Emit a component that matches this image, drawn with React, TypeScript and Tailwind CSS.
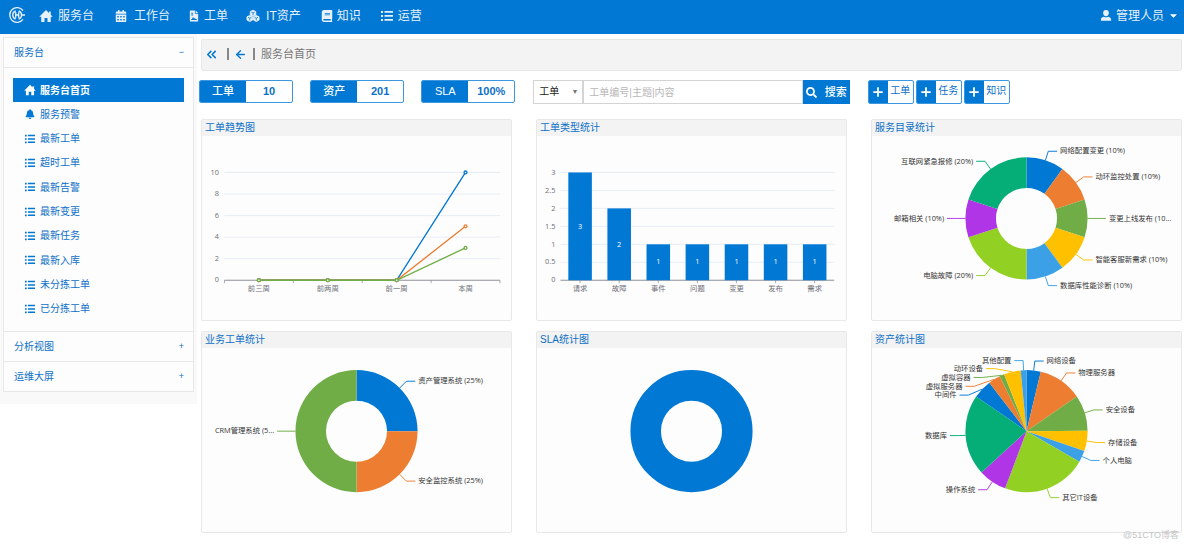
import React from "react";
import { FaCalendarAlt, FaBook, FaBell, FaSearch, FaCaretDown } from "react-icons/fa";
import { ChevronsLeft, ArrowLeft, Plus } from "lucide-react";

const CHART_FONT = "font-['Open_Sans','Noto_Sans_CJK_SC',sans-serif]";

type IconProps = { className?: string };

function HomeIcon({ className }: IconProps) {
  return (
    <svg viewBox="0 0 28 26" className={className} fill="currentColor" aria-hidden="true">
      <path d="M14 1 0.500 14.500H4.500V24.500Q4.500 25 5 25H11V17H17V25H23Q23.500 25 23.500 24.500V14.500H27.500L23.500 10.500V4H20V7Z" />
    </svg>
  );
}

function FileIcon({ className }: IconProps) {
  return (
    <svg viewBox="0 0 20 26" className={className} fill="currentColor" aria-hidden="true">
      <path fillRule="evenodd" d="M2 1H12V8H19V24Q19 25 18 25H2Q1 25 1 24V2Q1 1 2 1ZM4 6V8H8V6ZM4 10V12H8V10ZM4 21.500H16V19.500H13.500L11.500 17.500 9.800 19.200 8.200 14.500 5.500 19.500H4Z" />
      <path d="M13.500 1V6.500H19Z" />
    </svg>
  );
}

function CubesIcon({ className }: IconProps) {
  const cube = "M0-6.200 5.600-3.400V3.200L0 6 -5.600 3.200V-3.400Z";
  return (
    <svg viewBox="0 0 28 26" className={className} aria-hidden="true">
      {[[14, 7.500], [7.500, 18], [20.500, 18]].map(([x, y]) => (
        <g key={x} transform={`translate(${x} ${y})`}>
          <path d={cube} fill="currentColor" stroke="currentColor" strokeWidth="1.6" strokeLinejoin="round" />
          <path d="M-3.500-2.400 0-.6 3.500-2.400M0-.6V4" fill="none" stroke="#0078d4" strokeWidth="1.6" />
        </g>
      ))}
    </svg>
  );
}

function ListIcon({ className }: IconProps) {
  return (
    <svg viewBox="0 0 12 12" className={className} fill="currentColor" aria-hidden="true">
      {[1, 5, 9].map((y) => (
        <path key={y} d={`M0 ${y}h2v2H0zM3.500 ${y}H12v1.800H3.500z`} />
      ))}
    </svg>
  );
}

const navItems = [
  { label: "服务台", icon: HomeIcon, size: "size-[14px]", pad: "ml-[14px] gap-[5px]" },
  { label: "工作台", icon: FaCalendarAlt, size: "size-3", pad: "ml-[21px] gap-[7px]" },
  { label: "工单", icon: FileIcon, size: "h-3 w-[10px]", pad: "ml-[19px] gap-[5px]" },
  { label: "IT资产", icon: CubesIcon, size: "size-[14px]", pad: "ml-[18px] gap-[6px]" },
  { label: "知识", icon: FaBook, size: "size-3", pad: "ml-5 gap-1" },
  { label: "运营", icon: ListIcon, size: "size-3", pad: "ml-5 gap-[5px]" },
];

const sideItems = [
  "服务台首页", "服务预警", "最新工单", "超时工单", "最新告警",
  "最新变更", "最新任务", "最新入库", "未分拣工单", "已分拣工单",
];

function Logo() {
  return (
    <svg viewBox="0 0 24 24" className="size-4" fill="none" stroke="currentColor" aria-hidden="true">
      <path d="M21 5.500A11 11 0 1 0 21 18.500" strokeWidth="2" />
      <path d="M10 6A6.300 6.300 0 0 0 10 18M14.500 6A6.300 6.300 0 0 1 14.500 18" strokeWidth="2" />
      <path d="M10 8v8M14.500 8v8M10 12h4.500M19 12h5" strokeWidth="2" />
    </svg>
  );
}

function UserIcon() {
  return (
    <svg viewBox="0 0 12 14" className="h-[13px] w-3" fill="currentColor" aria-hidden="true">
      <path d="M6 1C4 1 2.900 2.400 2.900 4.200 2.900 6 4.200 7.800 6 7.800S9.100 6 9.100 4.200C9.100 2.400 8 1 6 1ZM3.600 8.300C1.500 8.900.5 9.800.5 11.400V12.600H11.500V11.400C11.500 9.800 10.500 8.900 8.400 8.300 7 9.200 5 9.200 3.600 8.300Z" />
    </svg>
  );
}

function Header() {
  return (
    <header className="flex h-[34px] items-center bg-[#0078d4] pr-[5px] pb-[3px] pl-[9px] text-xs text-[#e8f1f9]">
      <a href="#" aria-label="首页" className="pb-[2px]"><Logo /></a>
      <nav className="flex flex-1 items-center">
        {navItems.map(({ label, icon: Icon, size, pad }) => (
          <a key={label} href="#" className={`flex items-center whitespace-nowrap ${pad}`}>
            <Icon className={size} />
            <span>{label}</span>
          </a>
        ))}
      </nav>
      <button type="button" className="flex items-center gap-1">
        <UserIcon />
        <span>管理人员</span>
        <FaCaretDown className="size-[11px] text-white" />
      </button>
    </header>
  );
}

function SideHeading({ label, open }: { label: string; open?: boolean }) {
  return (
    <h2>
      <button type="button" aria-expanded={!!open} className="flex h-[29px] w-full items-center justify-between pr-[9px] pl-[10px]">
        <span>{label}</span>
        <span className="text-[9px]">{open ? "−" : "+"}</span>
      </button>
    </h2>
  );
}

function Sidebar() {
  return (
    <aside className="w-[197px] shrink-0 self-start bg-[#f9f9f9] pt-[3px] pr-[3px] pb-3 pl-[3px] text-[10px] text-[#0d70c8]">
      <div className="divide-y divide-[#e8e8e8] border border-[#e8e8e8] bg-[#fdfdfd]">
        <section>
          <SideHeading label="服务台" open />
        </section>
        <ul className="flex h-[264px] flex-col justify-between px-[9px] py-[10px]">
          {sideItems.map((label, i) => {
            const Icon = i === 0 ? HomeIcon : i === 1 ? FaBell : ListIcon;
            return (
              <li key={label}>
                <a
                  href="#"
                  className={`flex h-6 items-center gap-[5px] pl-[11px] ${i === 0 ? "bg-[#0078d4] font-bold text-white" : ""}`}
                >
                  <span className="flex w-[11px] justify-center text-[#0078d4]">
                    <Icon className={i === 0 ? "size-3 shrink-0 text-white" : "size-[10px]"} />
                  </span>
                  <span>{label}</span>
                </a>
              </li>
            );
          })}
        </ul>
        <section><SideHeading label="分析视图" /></section>
        <section><SideHeading label="运维大屏" /></section>
      </div>
    </aside>
  );
}

function Stat({ label, value }: { label: string; value: string }) {
  return (
    <dl className="flex h-[23px] w-[94px] items-stretch overflow-hidden rounded-[2px] border border-[#3a97e0] text-center leading-[21px]">
      <dt className="w-1/2 bg-[#0078d4] text-[11px] font-medium text-white">{label}</dt>
      <dd className="w-1/2 text-[11px] font-bold text-[#0d70c8]">{value}</dd>
    </dl>
  );
}

function Toolbar() {
  return (
    <div className="mt-[9px] -mr-[2px] -ml-[2px] grid grid-cols-3 gap-[18px]">
      <div className="flex justify-between">
        <Stat label="工单" value="10" />
        <Stat label="资产" value="201" />
        <Stat label="SLA" value="100%" />
      </div>
      <form className="flex h-6" onSubmit={(e) => e.preventDefault()}>
        <div className="relative flex w-[50px]">
          <select aria-label="类型" className="block h-6 w-full appearance-none border border-[#d4d4d4] bg-white pl-[5px] text-[10px] leading-[20px] text-[#222]">
            <option>工单</option>
          </select>
          <span className="pointer-events-none absolute top-0 right-[5px] text-[7px] leading-6 text-[#777]">▼</span>
        </div>
        <input
          type="text"
          aria-label="关键字"
          placeholder="工单编号|主题|内容"
          className="min-w-0 flex-1 border border-[#d4d4d4] bg-white px-[5px] text-[10px] placeholder:text-[#b8b8b8]"
        />
        <button type="submit" className="flex w-[47px] items-center justify-between bg-[#0078d4] pr-[3px] pl-[3px] text-[11px] font-medium text-white">
          <FaSearch className="size-[11px]" />
          搜索
        </button>
      </form>
      <div className="flex gap-[2px]">
        {["工单", "任务", "知识"].map((label) => (
          <button key={label} type="button" className="flex h-6 w-[46px] items-center overflow-hidden rounded-[2px] border border-[#3a97e0] text-[10px] text-[#0d70c8]">
            <span className="flex h-full w-[19px] items-center justify-center bg-[#0078d4] text-white">
              <Plus className="size-[14px]" strokeWidth={3} />
            </span>
            <span className="flex-1 pb-[3px] text-center">{label}</span>
          </button>
        ))}
      </div>
    </div>
  );
}

function Card({ title, children }: { title: string; children: React.ReactNode }) {
  return (
    <section className="overflow-hidden rounded-[2px] border border-[#e8e8e8] bg-[#fdfdfd]">
      <h3 className="h-4 bg-[#f3f3f3] pl-[3px] text-[10px] leading-[15px] text-[#0d70c8]">{title}</h3>
      {children}
    </section>
  );
}

function ChartFrame({ label, children }: { label: string; children: React.ReactNode }) {
  return (
    <svg viewBox="0 0 420 250" role="img" aria-label={label} className={`block h-[184px] w-full text-[10px] ${CHART_FONT}`}>
      {children}
    </svg>
  );
}

const PLOT_TOP = 49.500;
const PLOT_BOTTOM = 196;

function Axes({ x0, x1, max, step, labelX, categories, ticks }: {
  x0: number; x1: number; max: number; step: number; labelX: number; categories: string[]; ticks: number[];
}) {
  const pitch = (x1 - x0) / categories.length;
  const values = Array.from({ length: Math.round(max / step) + 1 }, (_, i) => i * step);
  const yOf = (v: number) => PLOT_BOTTOM - (v / max) * (PLOT_BOTTOM - PLOT_TOP);
  return (
    <g>
      {values.map((v) => (
        <g key={v}>
          {v > 0 && <line x1={x0} x2={x1} y1={yOf(v)} y2={yOf(v)} stroke="#e6ebf5" strokeWidth="1.3" />}
          <text x={labelX} y={yOf(v) + 3} textAnchor="end" fill="#6e7079">{v}</text>
        </g>
      ))}
      <line x1={x0} x2={x1} y1={PLOT_BOTTOM} y2={PLOT_BOTTOM} stroke="#888b93" strokeWidth="1.3" />
      {ticks.map((t) => (
        <line key={t} x1={x0 + t * pitch} x2={x0 + t * pitch} y1={PLOT_BOTTOM} y2={PLOT_BOTTOM + 4} stroke="#888b93" strokeWidth="1" />
      ))}
      {categories.map((c, i) => (
        <text key={c} x={x0 + (i + 0.5) * pitch} y={PLOT_BOTTOM + 14} textAnchor="middle" fill="#6e7079">{c}</text>
      ))}
    </g>
  );
}

function LineChart() {
  const series = [
    { color: "#0078d4", data: [0, 0, 0, 10] },
    { color: "#ed7d31", data: [0, 0, 0, 5] },
    { color: "#70ad47", data: [0, 0, 0, 3] },
  ];
  const x0 = 30.500;
  const x1 = 405;
  const px = (i: number) => x0 + ((i + 0.5) * (x1 - x0)) / 4;
  const py = (v: number) => PLOT_BOTTOM - (v / 10) * (PLOT_BOTTOM - PLOT_TOP);
  return (
    <ChartFrame label="工单趋势图">
      <Axes x0={x0} x1={x1} max={10} step={2} labelX={23} categories={["前三周", "前两周", "前一周", "本周"]} ticks={[0, 1, 2, 3, 4]} />
      {series.map(({ color, data }) => (
        <g key={color} stroke={color}>
          <polyline points={data.map((v, i) => `${px(i)},${py(v)}`).join(" ")} fill="none" strokeWidth="1.8" />
          {data.map((v, i) => <circle key={i} cx={px(i)} cy={py(v)} r="2" fill="#fff" strokeWidth="1.8" />)}
        </g>
      ))}
    </ChartFrame>
  );
}

function BarChart() {
  const data = [3, 2, 1, 1, 1, 1, 1];
  const x0 = 32;
  const x1 = 404;
  const pitch = (x1 - x0) / 7;
  return (
    <ChartFrame label="工单类型统计">
      <Axes x0={x0} x1={x1} max={3} step={0.5} labelX={25} categories={["请求", "故障", "事件", "问题", "变更", "发布", "需求"]} ticks={[0.5, 1.5, 2.5, 3.5, 4.5, 5.5, 6.5]} />
      {data.map((v, i) => {
        const h = (v / 3) * (PLOT_BOTTOM - PLOT_TOP);
        const cx = x0 + (i + 0.5) * pitch;
        return (
          <g key={i}>
            <rect x={cx - 16} y={PLOT_BOTTOM - h} width="32" height={h} fill="#0078d4" />
            <text x={cx} y={PLOT_BOTTOM - h / 2 + 3} textAnchor="middle" fill="#fff">{v}</text>
          </g>
        );
      })}
    </ChartFrame>
  );
}

type Slice = { label?: string; value: number; color: string; elbow?: [number, number] };

const R = 83;

function point(angle: number, r: number): [number, number] {
  const a = (angle * Math.PI) / 180;
  return [r * Math.sin(a), -r * Math.cos(a)];
}

function PieChart({ title, slices, inner, cy }: { title: string; slices: Slice[]; inner: number; cy: number }) {
  const total = slices.reduce((s, d) => s + d.value, 0);
  let start = 0;
  return (
    <ChartFrame label={title}>
      <g transform={`translate(210 ${cy})`}>
        {slices.length === 1 && (
          <circle r={(R + inner) / 2} fill="none" stroke={slices[0].color} strokeWidth={R - inner} />
        )}
        {slices.length > 1 && slices.map((s, i) => {
          const sweep = (s.value / total) * 360;
          const end = start + sweep;
          const mid = start + sweep / 2;
          const large = sweep > 180 ? 1 : 0;
          const d = `M${point(start, R)}A${R} ${R} 0 ${large} 1 ${point(end, R)}L${point(end, inner)}A${inner} ${inner} 0 ${large} 0 ${point(start, inner)}Z`;
          start = end;
          const side = mid <= 180 ? 1 : -1;
          const [ex, ey] = s.elbow ?? point(mid, R + 13);
          return (
            <g key={i}>
              <path d={d} fill={s.color} />
              <polyline points={`${point(mid, R)} ${ex},${ey} ${ex + side * 12},${ey}`} fill="none" stroke={s.color} strokeWidth="1.3" />
              <text x={ex + side * 16} y={ey + 3} textAnchor={side === 1 ? "start" : "end"} fill="#333">{s.label}</text>
            </g>
          );
        })}
      </g>
    </ChartFrame>
  );
}

const catalog: Slice[] = [
  { label: "网络配置变更 (10%)", value: 10, color: "#0078d4" },
  { label: "动环监控处置 (10%)", value: 10, color: "#ed7d31" },
  { label: "变更上线发布 (10...", value: 10, color: "#70ad47" },
  { label: "智能客服新需求 (10%)", value: 10, color: "#ffc000" },
  { label: "数据库性能诊断 (10%)", value: 10, color: "#3ba0e6" },
  { label: "电脑故障 (20%)", value: 20, color: "#92d024" },
  { label: "邮箱相关 (10%)", value: 10, color: "#b035e6" },
  { label: "互联网紧急报修 (20%)", value: 20, color: "#04ae76" },
];

const business: Slice[] = [
  { label: "资产管理系统 (25%)", value: 25, color: "#0078d4" },
  { label: "安全监控系统 (25%)", value: 25, color: "#ed7d31" },
  { label: "CRM管理系统 (5...", value: 50, color: "#70ad47" },
];

const assets: Slice[] = [
  { label: "网络设备", value: 13.500, color: "#0078d4" },
  { label: "物理服务器", value: 42, color: "#ed7d31" },
  { label: "安全设备", value: 34, color: "#70ad47" },
  { label: "存储设备", value: 19.500, color: "#ffc000" },
  { label: "个人电脑", value: 11, color: "#3ba0e6" },
  { label: "其它IT设备", value: 80.500, color: "#92d024" },
  { label: "操作系统", value: 27, color: "#b035e6" },
  { label: "数据库", value: 77, color: "#04ae76", elbow: [-92, 6] },
  { label: "中间件", value: 18, color: "#0078d4", elbow: [-79, -49] },
  { label: "虚拟服务器", value: 11.500, color: "#ed7d31", elbow: [-71, -61] },
  { label: "虚拟容器", value: 4.500, color: "#70ad47", elbow: [-60, -73] },
  { label: "动环设备", value: 16, color: "#ffc000", elbow: [-43, -85] },
  { label: "其他配置", value: 5.500, color: "#3ba0e6" },
];

export default function App() {
  return (
    <div className="relative min-h-screen bg-white font-['Liberation_Sans','Noto_Sans_CJK_SC',sans-serif]">
      <Header />
      <div className="flex">
        <Sidebar />
        <main className="min-w-0 flex-1 pt-[5px] pr-[2px] pb-3 pl-1">
          <div className="flex h-8 items-center rounded-[2px] border border-[#e8e8e8] bg-[#f3f3f3] pb-[2px] pl-[2px] text-[11px] text-[#777]">
            <button type="button" aria-label="收起" className="text-[#0078d4]"><ChevronsLeft className="size-[15px]" strokeWidth={2.500} /></button>
            <span className="ml-2 h-3 w-[2px] bg-[#888]" />
            <button type="button" aria-label="返回" className="ml-[5px] text-[#0078d4]"><ArrowLeft className="size-[13px]" strokeWidth={2.500} /></button>
            <span className="ml-[6px] h-3 w-[2px] bg-[#888]" />
            <h1 className="ml-[6px]">服务台首页</h1>
          </div>
          <Toolbar />
          <div className="mt-[15px] grid grid-cols-3 gap-x-6 gap-y-[10px]">
            <Card title="工单趋势图"><LineChart /></Card>
            <Card title="工单类型统计"><BarChart /></Card>
            <Card title="服务目录统计"><PieChart title="服务目录统计" slices={catalog} inner={41.500} cy={112} /></Card>
            <Card title="业务工单统计"><PieChart title="业务工单统计" slices={business} inner={41.500} cy={113} /></Card>
            <Card title="SLA统计图"><PieChart title="SLA统计图" slices={[{ value: 1, color: "#0078d4" }]} inner={41.500} cy={113} /></Card>
            <Card title="资产统计图"><PieChart title="资产统计图" slices={assets} inner={0} cy={113} /></Card>
          </div>
        </main>
      </div>
      <span className="absolute right-[5px] bottom-[3px] text-[9px] text-[#c4c4c4]">@51CTO博客</span>
    </div>
  );
}
